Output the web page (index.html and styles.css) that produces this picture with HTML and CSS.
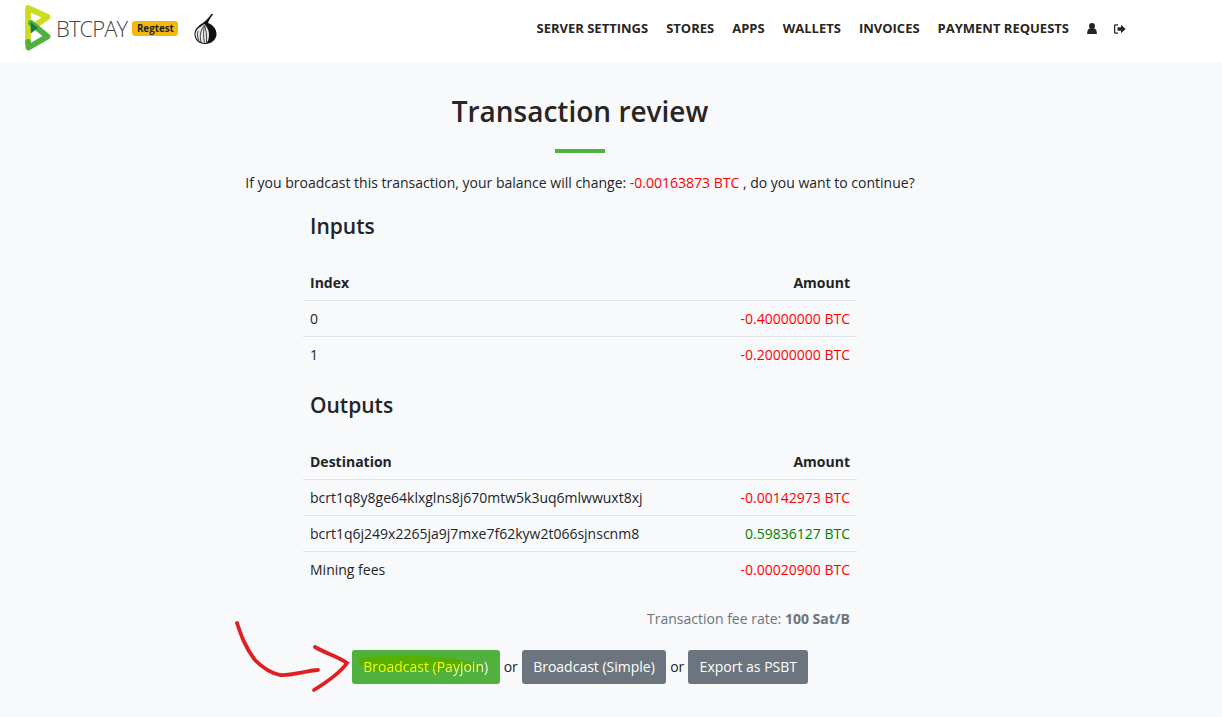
FILE: index.html
```html
<!DOCTYPE html>
<html lang="en">
<head>
<meta charset="utf-8">
<title>Transaction review</title>
<link rel="stylesheet" href="styles.css">
</head>
<body>
<nav class="topbar">
  <div class="brand">
    <svg class="logo" width="26" height="47" viewBox="0 0 26 47">
      <path d="M3 38 V4 L22.500 13 L6 24" fill="none" stroke="#cedc21" stroke-width="5.800" stroke-linejoin="round" stroke-linecap="round"/>
      <path d="M6 19 L22.500 32.500 L3.500 43.500 L3 38" fill="none" stroke="#51b13e" stroke-width="5.800" stroke-linejoin="round" stroke-linecap="round"/>
      <path d="M5.700 18 L13 24 L5.700 29.500 Z" fill="#1e7a44"/>
    </svg>
    <span class="wordmark">BTCPAY</span>
    <span class="badge">Regtest</span>
    <svg class="onion" width="23" height="32" viewBox="0 0 23 32">
      <path d="M10 9 C13 7 15 4 18 0.500 L19 1.500 C17 4 15 7 14 10 C19 12 22.500 16 22.500 21 C22.500 27 17 31 11 31 C5 31 0.500 27 0.500 21 C0.500 15 6 12 10 9 Z" fill="#111"/>
      <path d="M10.500 11 C6 14 1.500 16 1.500 21.500 C1.500 26 6 30 11 30 C14 30 15 26 15 21 C15 17 13 14 10.500 11 Z" fill="#e8e8e8"/>
      <path d="M10.500 12 C7.500 16 5 21 7 29 M10.500 12 C9.500 17 9 23 10.500 29.500 M10.500 12 C12 17 13 22 12.500 29 M4 18 C3 21 3.500 25 5 27.500" fill="none" stroke="#444" stroke-width="1"/>
    </svg>
  </div>
  <ul class="menu">
    <li>Server Settings</li>
    <li>Stores</li>
    <li>Apps</li>
    <li>Wallets</li>
    <li>Invoices</li>
    <li>Payment Requests</li>
    <li class="icon-item"><svg width="10" height="11" viewBox="0 0 10 11"><circle cx="5" cy="3" r="3" fill="#2a2522"/><path d="M.2 11 C0 7 1.500 5 5 5 C8.500 5 10 7 9.800 11 Z" fill="#2a2522"/></svg></li>
    <li class="icon-item"><svg width="12" height="10" viewBox="0 0 12 10"><path d="M4 .8 H1.500 Q.6 .8 .6 1.800 V8.200 Q.6 9.200 1.500 9.200 H4" fill="none" stroke="#2a2522" stroke-width="1.300"/><path d="M3.500 3.300 H7 V.7 L11.700 5 L7 9.300 V6.700 H3.500 Z" fill="#2a2522"/></svg></li>
  </ul>
</nav>

<main class="page">
  <h1 class="title">Transaction review</h1>
  <div class="rule"></div>
  <p class="lead">If you broadcast this transaction, your balance will change: <span class="neg">-0.00163873 BTC</span> , do you want to continue?</p>

  <section class="review">
    <h3 class="section-title">Inputs</h3>
    <table class="grid">
      <thead><tr><th>Index</th><th class="num">Amount</th></tr></thead>
      <tbody>
        <tr><td>0</td><td class="num neg">-0.40000000 BTC</td></tr>
        <tr><td>1</td><td class="num neg">-0.20000000 BTC</td></tr>
      </tbody>
    </table>

    <h3 class="section-title">Outputs</h3>
    <table class="grid">
      <thead><tr><th>Destination</th><th class="num">Amount</th></tr></thead>
      <tbody>
        <tr><td>bcrt1q8y8ge64klxglns8j670mtw5k3uq6mlwwuxt8xj</td><td class="num neg">-0.00142973 BTC</td></tr>
        <tr><td>bcrt1q6j249x2265ja9j7mxe7f62kyw2t066sjnscnm8</td><td class="num pos">0.59836127 BTC</td></tr>
        <tr><td>Mining fees</td><td class="num neg">-0.00020900 BTC</td></tr>
      </tbody>
    </table>

    <p class="fee">Transaction fee rate: <b>100 Sat/B</b></p>
  </section>

  <div class="actions">
    <span class="btn btn-green">
      <svg class="marker" width="130" height="24" viewBox="0 0 130 24">
        <path d="M2 6 C20 3 60 3 95 6 C108 8 118 11 124 14 L124 18 L70 17 L12 20 L8 15 L2 12 Z" fill="#56b000"/>
      </svg>
      <span class="btn-label">Broadcast (Payjoin)</span>
    </span>
    <span class="or">or</span>
    <span class="btn btn-gray">Broadcast (Simple)</span>
    <span class="or">or</span>
    <span class="btn btn-gray">Export as PSBT</span>
    <svg class="scribble" width="125" height="82" viewBox="0 0 125 82">
      <path d="M2 3 C6 15 10 27 20 40 C26 46 35 53 45 55 C55 56 70 51 83 50" fill="none" stroke="#e02020" stroke-width="3.800" stroke-linecap="round"/>
      <path d="M80 27 C90 33 104 37 112 43 C105 53 92 62 79 70" fill="none" stroke="#e02020" stroke-width="3.800" stroke-linecap="round"/>
    </svg>
  </div>
</main>
</body>
</html>
```
FILE: styles.css
```css
* { box-sizing: border-box; }
html, body { margin: 0; padding: 0; }
body {
  background: #f8f9fa;
  color: #212529;
  font-family: "Open Sans", sans-serif;
  font-size: 14px;
  line-height: 21px;
  height: 717px;
  overflow: hidden;
}
.topbar {
  height: 62px;
  background: #fff;
  display: flex;
  align-items: flex-start;
  justify-content: space-between;
  padding-left: 25px;
  padding-right: 96px;
}
.brand { display: flex; align-items: flex-start; }
.logo { margin-top: 4px; }
.wordmark {
  font-family: "Open Sans", sans-serif;
  font-weight: 300;
  font-size: 22px;
  line-height: 28px;
  margin: 14px 0 0 5px;
  color: #444;
  letter-spacing: -0.9px;
}
.badge {
  margin: 21px 0 0 5px;
  background: #f7b70f;
  color: #212529;
  font-size: 9.800px;
  font-weight: 700;
  line-height: 15px;
  height: 15px;
  padding: 0 4.600px;
  border-radius: 3px;
}
.onion { margin: 13px 0 0 16px; }
.menu {
  list-style: none;
  margin: 0;
  padding: 18px 0 0;
  display: flex;
  gap: 18px;
  font-size: 13px;
  font-weight: 700;
  text-transform: uppercase;
  color: #2a2522;
}
.icon-item { display: flex; align-items: center; }
.icon-item + .icon-item { margin-left: -1px; }

.page { width: 1222px; padding-top: 28px; display: flex; flex-direction: column; align-items: center; position: relative; }
.title {
  margin: 0 0 0 -62px;
  font-size: 28px;
  font-weight: 600;
  line-height: 42px;
  color: #2a2522;
}
.rule { width: 50px; height: 4px; background: #51b13e; margin: 17px 0 0 -62px; }
.lead { margin: 19px 0 0 -62px; line-height: 21px; color: #212529; }
.neg { color: #ff0000; }
.pos { color: #008000; }
.review { width: 554px; margin: 18px 0 0 -62px; }
.section-title {
  margin: 0;
  padding-left: 7px;
  font-size: 21px;
  font-weight: 600;
  line-height: 30px;
  color: #212529;
}
.grid { width: 100%; border-collapse: collapse; margin: 24px 0 17px; }
.grid th, .grid td { padding: 7px; height: 36px; text-align: left; border-top: 1px solid #dee2e6; }
.grid th { border-top: 0; font-weight: 700; height: 35px; }
.grid .num { text-align: right; }
.fee { margin: 0; padding-top: 4px; padding-right: 7px; text-align: right; color: #6c757d; }
.fee b { color: #6c757d; }

.actions { display: flex; align-items: center; gap: 4px; margin: 21px 0 0 -62px; position: relative; font-size: 14px; }
.btn {
  display: block;
  height: 34px;
  line-height: 34px;
  padding: 0 11.300px;
  border-radius: 3px;
  color: #fff;
}
.btn-green { background: #51b13e; position: relative; width: 148px; padding: 0; text-align: center; }
.btn-label {
  position: relative;
  background: linear-gradient(90deg, #ffff1a 0, #ffff1a 55%, #ffffb0 85%, #ffffff 100%);
  -webkit-background-clip: text;
  background-clip: text;
  color: transparent;
}
.btn-gray { background: #6c757d; }
.or { color: #212529; margin-top: -1px; }
.scribble { position: absolute; left: -117px; top: -30px; }
.marker { position: absolute; left: 5px; top: 2px; }
```
